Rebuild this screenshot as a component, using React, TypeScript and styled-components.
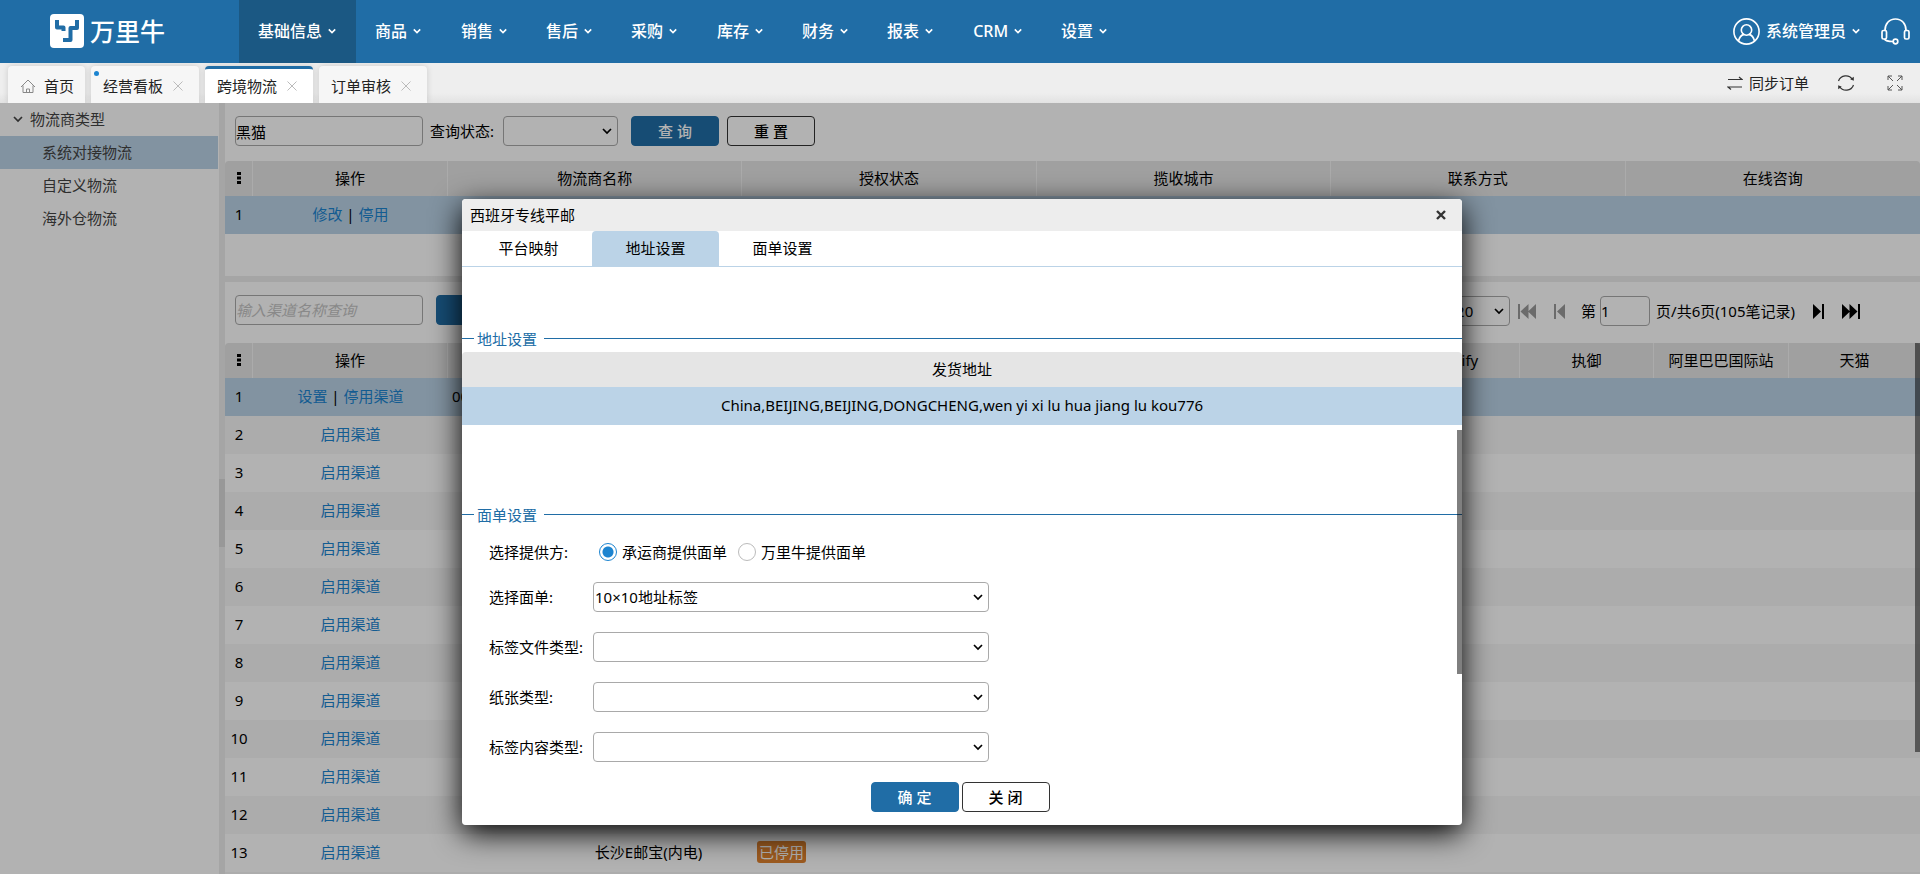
import React, { useState } from "react";
import styled, { createGlobalStyle, css } from "styled-components";

const BLUE = "#206da6";
const SELECTED = "#bbd3e7";
const LINK = "#1c84d0";

const GlobalStyle = createGlobalStyle`
  *, *::before, *::after { box-sizing: border-box; }
  html, body, #root { height: 100%; }
  body {
    margin: 0;
    overflow: hidden;
    color: #000;
    font: 15px/20px "Noto Sans", "Noto Sans CJK SC", sans-serif;
    font-weight: 400;
  }
  button, input, select { font: inherit; color: inherit; margin: 0; }
  button { border: 0; background: none; padding: 0; cursor: pointer; }
  a { color: inherit; text-decoration: none; }
`;

const Page = styled.div`
  display: flex;
  flex-direction: column;
  height: 100%;
`;

/* ---------- top bar ---------- */
const TopBar = styled.header`
  display: flex;
  flex: none;
  height: 63px;
  padding-bottom: 1px;
  background: ${BLUE};
  color: #fff;
  font-size: 16px;
`;
const Brand = styled.a`
  display: flex;
  align-items: center;
  gap: 6px;
  width: 239px;
  padding-left: 50px;
  font-size: 25px;
  line-height: 32px;
  font-weight: 500;
`;
const Menu = styled.nav`
  display: flex;
`;
const MenuItem = styled.a<{ $active?: boolean }>`
  display: flex;
  align-items: center;
  gap: 6px;
  margin-bottom: -1px;
  padding: 0 20px 1px 19px;
  font-weight: 500;
  background: ${(p) => (p.$active ? "#1b5883" : "transparent")};
  &:nth-child(3n) { padding-left: 20px; }
`;
const Account = styled.div`
  display: flex;
  align-items: center;
  margin-left: auto;
  padding-right: 10px;
  gap: 21px;
`;
const UserButton = styled.button`
  display: flex;
  align-items: center;
  gap: 6px;
  font-weight: 500;
`;
const IconButton = styled.button`
  display: flex;
`;

/* ---------- page tabs ---------- */
const TabBar = styled.div`
  display: flex;
  flex: none;
  align-items: flex-end;
  gap: 6px;
  height: 40px;
  padding: 0 17px 0 8px;
  overflow: hidden;
  background: linear-gradient(#eee 75%, #e2e2e2);
`;
const PageTab = styled.div<{ $active?: boolean; $home?: boolean }>`
  position: relative;
  display: flex;
  align-items: center;
  gap: ${(p) => (p.$home ? 8 : 10)}px;
  height: 37px;
  padding: 3px ${(p) => (p.$home ? 11 : 16)}px 0 12px;
  border-radius: 4px 4px 0 0;
  background: ${(p) => (p.$active ? "#fff" : "#f6f6f6")};
  box-shadow: 0 0 6px rgba(0, 0, 0, 0.15);
  color: #222;
  ${(p) => p.$active && css`border-top: 3px solid ${BLUE}; padding-top: 0;`}
`;
const NewDot = styled.i`
  position: absolute;
  top: 5px;
  left: 3px;
  width: 5px;
  height: 5px;
  border-radius: 50%;
  background: ${LINK};
`;
const TabTools = styled.div`
  display: flex;
  align-items: center;
  gap: 32px;
  height: 40px;
  margin-left: auto;
  padding-bottom: 1px;
  color: #222;
`;
const SyncButton = styled.button`
  display: flex;
  align-items: center;
  gap: 6px;
  margin-right: -4px;
`;

/* ---------- workspace ---------- */
const Workspace = styled.div`
  position: relative;
  display: flex;
  flex: 1;
  min-height: 0;
  overflow: hidden;
`;
const Sidebar = styled.aside`
  flex: none;
  width: 219px;
  padding-right: 1px;
  color: #444;
`;
const TreeRow = styled.a<{ $root?: boolean; $selected?: boolean }>`
  display: flex;
  align-items: center;
  gap: 7px;
  height: 33px;
  padding: 0 0 2px ${(p) => (p.$root ? 13 : 42)}px;
  background: ${(p) => (p.$selected ? SELECTED : "transparent")};
`;
const Splitter = styled.div`
  display: flex;
  flex: none;
  align-items: center;
  width: 6px;
  background: #ececec;
`;
const SplitterGrip = styled.div`
  width: 6px;
  height: 68px;
  margin-top: 48px;
  background: #dadada;
`;
const Main = styled.main`
  display: flex;
  flex: 1;
  flex-direction: column;
  min-width: 0;
`;
const CarrierPane = styled.section`
  flex: none;
  height: 179px;
  border-bottom: 6px solid #ececec;
`;
const ChannelPane = styled.section`
  position: relative;
  flex: 1;
  min-height: 0;
  overflow: hidden;
`;
const Toolbar = styled.div<{ $gapBelow: number }>`
  display: flex;
  align-items: center;
  height: 30px;
  margin: 13px 0 ${(p) => p.$gapBelow}px 10px;
`;
const TextInput = styled.input<{ $width: number }>`
  width: ${(p) => p.$width}px;
  height: 30px;
  padding: 0;
  border: 1px solid #a9a9a9;
  border-radius: 4px;
  background: #fff;
  &::placeholder { color: #c4c4c4; font-style: italic; opacity: 1; }
`;
const FieldLabel = styled.label`
  margin: 0 9px 0 7px;
`;
const Button = styled.button<{ $primary?: boolean; $left?: number }>`
  width: 88px;
  height: 30px;
  margin-left: ${(p) => p.$left ?? 0}px;
  padding-bottom: 1px;
  border: 1px solid ${(p) => (p.$primary ? BLUE : "#333")};
  border-radius: 4px;
  background: ${(p) => (p.$primary ? BLUE : "#fff")};
  color: ${(p) => (p.$primary ? "#fff" : "#000")};
  font-weight: 500;
`;

const SelectFrame = styled.div<{ $width: number }>`
  position: relative;
  width: ${(p) => p.$width}px;
  height: 30px;
`;
const NativeSelect = styled.select`
  width: 100%;
  height: 100%;
  padding: 0 24px 0 1px;
  appearance: none;
  border: 1px solid #a9a9a9;
  border-radius: 4px;
  background: #fff;
`;
const SelectArrow = styled.span`
  position: absolute;
  top: 10px;
  right: 6px;
  display: flex;
  pointer-events: none;
`;

/* ---------- grids ---------- */
const Grid = styled.table`
  width: 100%;
  table-layout: fixed;
  border-collapse: separate;
  border-spacing: 0;
  text-align: center;
`;
const HeadCell = styled.th`
  height: 35px;
  padding: 0 0 2px;
  overflow: hidden;
  border-right: 1px solid #f5f5f5;
  background: #e5e5e5;
  font-weight: 400;
  white-space: nowrap;
  &:first-child { border-top-left-radius: 4px; }
  &:last-child { border-right: 0; border-top-right-radius: 4px; }
`;
const BodyRow = styled.tr<{ $selected?: boolean }>`
  background: #fff;
  &:nth-child(even) { background: #f7f7f7; }
  ${(p) => p.$selected && css`&& { background: ${SELECTED}; }`}
`;
const Cell = styled.td<{ $left?: boolean }>`
  height: 38px;
  padding: 0 4px 2px;
  overflow: hidden;
  text-align: ${(p) => (p.$left ? "left" : "center")};
  white-space: nowrap;
`;
const RowNumber = styled(Cell)`
  padding: 0 0 2px;
`;
const Action = styled.a`
  color: ${LINK};
`;
const Disabled = styled.span`
  display: inline-block;
  height: 22px;
  padding: 0 2px;
  border-radius: 3px;
  background: #e1832e;
  color: #fff;
  line-height: 22px;
`;
const GridScrollbar = styled.div`
  position: absolute;
  top: 61px;
  right: 0;
  width: 5px;
  height: 409px;
  background: rgba(0, 0, 0, 0.5);
`;
const Pager = styled.div`
  display: flex;
  align-items: center;
  margin-left: auto;
  padding: 2px 60px 0 0;
`;
const PageText = styled.span`
  margin: 0 18px 0 6px;
`;
const PageLabel = styled.label`
  margin: 0 4px 0 16px;
`;
const PagerButton = styled.button<{ $left: number }>`
  display: flex;
  margin-left: ${(p) => p.$left}px;
  color: #000;
  &:disabled { color: #9a9a9a; }
`;

/* ---------- dialog ---------- */
const Overlay = styled.div`
  position: absolute;
  inset: 0;
  display: flex;
  align-items: flex-start;
  justify-content: center;
  padding: 96px 0 0 4px;
  background: rgba(0, 0, 0, 0.3);
`;
const Dialog = styled.div`
  width: 1000px;
  overflow: hidden;
  border-radius: 4px;
  background: #fff;
`;
const DialogShadow = styled.div`
  border-radius: 4px;
  box-shadow: 0 8px 30px #000;
`;
const DialogTitle = styled.div`
  display: flex;
  align-items: center;
  justify-content: space-between;
  height: 32px;
  padding: 0 16px 0 8px;
  background: #ededed;
`;
const DialogTabs = styled.div`
  display: flex;
  height: 36px;
  padding-left: 3px;
  border-bottom: 1px solid ${SELECTED};
`;
const DialogTab = styled.button<{ $active?: boolean }>`
  width: 127px;
  padding-bottom: 1px;
  border-radius: 4px 4px 0 0;
  background: ${(p) => (p.$active ? SELECTED : "transparent")};
`;
const DialogBody = styled.div`
  position: relative;
  padding-top: 62px;
`;
const Legend = styled.h2`
  display: flex;
  align-items: center;
  height: 20px;
  margin: 0;
  color: ${BLUE};
  font-size: 15px;
  font-weight: 400;
  line-height: 20px;
  &::before, &::after { content: ""; height: 1px; margin-bottom: 2px; background: ${BLUE}; }
  &::before { width: 12px; margin-right: 3px; }
  &::after { flex: 1; margin-left: 7px; }
`;
const AddressGrid = styled(Grid)`
  margin: 3px 0 80px;
`;
const Form = styled.div`
  display: flex;
  flex-direction: column;
  gap: 20px;
  padding: 17px 0 20px 27px;
`;
const FormRow = styled.div<{ $compact?: boolean }>`
  display: flex;
  align-items: center;
  height: ${(p) => (p.$compact ? 20 : 30)}px;
`;
const FormLabel = styled.label`
  width: 104px;
`;
const RadioGroup = styled.div`
  display: flex;
  align-items: center;
  gap: 11px;
  padding-left: 6px;
`;
const RadioLabel = styled.label`
  display: flex;
  align-items: center;
  gap: 5px;
`;
const Radio = styled.input`
  width: 18px;
  height: 18px;
  appearance: none;
  border: 1px solid #bbb;
  border-radius: 50%;
  background: #fff;
  &:checked {
    border-color: ${LINK};
    background: radial-gradient(circle, ${LINK} 5px, #fff 6px);
  }
`;
const DialogFooter = styled.div`
  display: flex;
  justify-content: center;
  gap: 3px;
  padding: 0 4px 13px 0;
`;
const DialogScrollbar = styled.div`
  position: absolute;
  top: 163px;
  right: 0;
  width: 5px;
  height: 244px;
  background: rgba(0, 0, 0, 0.5);
`;

/* ---------- icons ---------- */
const Chevron = ({ size = 8, width = 2 }: { size?: number; width?: number }) => (
  <svg width={size} height={size} viewBox="0 0 10 10" fill="none" stroke="currentColor" strokeWidth={width}>
    <path d="M1 3l4 4 4-4" />
  </svg>
);
const LogoMark = () => (
  <svg width="34" height="34" viewBox="0 0 34 34">
    <rect width="34" height="34" rx="4" fill="#fff" />
    <path d="M7 6v7.500h6.500v3.500M27 6v8h-6.500v12H13" fill="none" stroke={BLUE} strokeWidth="4" strokeLinejoin="round" />
  </svg>
);
const UserIcon = () => (
  <svg width="27" height="27" viewBox="0 0 27 27" fill="none" stroke="#fff" strokeWidth="1.6">
    <circle cx="13.500" cy="13.500" r="12.600" />
    <circle cx="13.500" cy="12" r="5.200" />
    <path d="M5.500 23c1-4 3-6 5.500-6.600M21.500 23c-1-4-3-6-5.500-6.600" />
  </svg>
);
const HeadsetIcon = () => (
  <svg width="29" height="27" viewBox="0 0 29 27" fill="none" stroke="#fff" strokeWidth="1.7">
    <path d="M4 12.500C4 6 8 1 14.500 1S25 6 25 12.500" />
    <rect x="1" y="12.500" width="4.500" height="8.500" rx="1.500" />
    <rect x="23.500" y="12.500" width="4.500" height="8.500" rx="1.500" />
    <path d="M3.500 21c1 2 3 2.500 8.500 2.500" />
    <circle cx="14.500" cy="23.500" r="2.300" />
  </svg>
);
const HomeIcon = () => (
  <svg width="16" height="15" viewBox="0 0 16 15" fill="none" stroke="#888">
    <path d="M1 8l7-7 7 7M3 6.500V13.500H13V6.500M6.500 13.500V10h3v3.500" />
  </svg>
);
const CloseIcon = () => (
  <svg width="10" height="10" viewBox="0 0 10 10" stroke="#bbb">
    <path d="M0.500 0.500l9 9M9.500 0.500l-9 9" />
  </svg>
);
const SwapIcon = () => (
  <svg width="16" height="14" viewBox="0 0 16 14" fill="none" stroke="#333" strokeWidth="1.200">
    <path d="M1 3.500h14l-3-2.500M15 11H1l3 2.500" />
  </svg>
);
const RefreshIcon = () => (
  <svg width="18" height="18" viewBox="0 0 18 18" fill="none" stroke="#333" strokeWidth="1.200">
    <path d="M1.500 7A7.800 7.800 0 0 1 15.500 5.500M16.500 11A7.800 7.800 0 0 1 2.500 12.500" />
    <path d="M16.800 2.800v4l-3.600-1.600zM1.200 15.200v-4l3.600 1.600z" fill="#333" stroke="none" />
  </svg>
);
const FullscreenIcon = () => (
  <svg width="16" height="16" viewBox="0 0 16 16" fill="none" stroke="#555">
    <path d="M1 5V1h4M1 1l5 5M11 1h4v4M15 1l-5 5M1 11v4h4M1 15l5-5M15 11v4h-4M15 15l-5-5" />
  </svg>
);
const DotsIcon = () => (
  <svg width="4" height="12" viewBox="0 0 4 12">
    <path d="M0 0h4v3h-4zM0 4.500h4v3h-4zM0 9h4v3h-4z" />
  </svg>
);
const DialogCloseIcon = () => (
  <svg width="10" height="10" viewBox="0 0 10 10" stroke="#333" strokeWidth="2.400">
    <path d="M1 1l8 8M9 1l-8 8" />
  </svg>
);
const StepIcon = ({ double, back }: { double?: boolean; back?: boolean }) => {
  const w = double ? 18 : 11;
  return (
    <svg width={w} height="15" viewBox={`0 0 ${w} 15`} fill="currentColor">
      <g transform={back ? `matrix(-1 0 0 1 ${w} 0)` : undefined}>
        <path d={double ? "M0 0l8 7.500-8 7.500zM7.500 0l8 7.500-8 7.500zM16 0h2v15h-2z" : "M0 0l8 7.500-8 7.500zM9 0h2v15H9z"} />
      </g>
    </svg>
  );
};

/* ---------- pieces ---------- */
interface SelectProps {
  id: string;
  width: number;
  options: string[];
  label?: string;
}
const Select = ({ id, width, options, label }: SelectProps) => (
  <SelectFrame $width={width}>
    <NativeSelect id={id} aria-label={label} defaultValue={options[0]}>
      {options.map((o) => (
        <option key={o}>{o}</option>
      ))}
    </NativeSelect>
    <SelectArrow>
      <Chevron size={10} width={1.7} />
    </SelectArrow>
  </SelectFrame>
);

const menu = ["基础信息", "商品", "销售", "售后", "采购", "库存", "财务", "报表", "CRM", "设置"];
const pageTabs = [
  { name: "经营看板", dot: true },
  { name: "跨境物流", active: true },
  { name: "订单审核" },
];
const carrierColumns = ["物流商名称", "授权状态", "揽收城市", "联系方式", "在线咨询"];
const channelColumns = [
  { width: 124 },
  { width: 153 },
  { width: 113 },
  { width: 137 },
  { width: 137 },
  { width: 137 },
  { width: 136 },
  { width: 135, name: "Shopify" },
  { width: 134, name: "执御" },
  { width: 135, name: "阿里巴巴国际站" },
  { name: "天猫" },
] as { width?: number; name?: string }[];
const channels = Array.from({ length: 13 }, (_, i) => ({
  id: i + 1,
  code: i === 0 ? "00" : "",
  name: i === 12 ? "长沙E邮宝(内电)" : "",
  disabled: i === 11 || i === 12,
}));
const formSelects = [
  { id: "sheet", label: "选择面单:", options: ["10×10地址标签"] },
  { id: "file-type", label: "标签文件类型:", options: [""] },
  { id: "paper-type", label: "纸张类型:", options: [""] },
  { id: "content-type", label: "标签内容类型:", options: [""] },
];

function AddressDialog() {
  const [provider, setProvider] = useState("承运商提供面单");
  return (
    <Overlay>
      <DialogShadow>
        <Dialog role="dialog" aria-labelledby="dialog-title">
          <DialogTitle>
            <span id="dialog-title">西班牙专线平邮</span>
            <IconButton aria-label="关闭"><DialogCloseIcon /></IconButton>
          </DialogTitle>
          <DialogTabs>
            <DialogTab>平台映射</DialogTab>
            <DialogTab $active>地址设置</DialogTab>
            <DialogTab>面单设置</DialogTab>
          </DialogTabs>
          <DialogBody>
            <Legend>地址设置</Legend>
            <AddressGrid>
              <thead>
                <tr><HeadCell>发货地址</HeadCell></tr>
              </thead>
              <tbody>
                <BodyRow $selected>
                  <Cell>China,BEIJING,BEIJING,DONGCHENG,wen yi xi lu hua jiang lu kou776</Cell>
                </BodyRow>
              </tbody>
            </AddressGrid>
            <Legend>面单设置</Legend>
            <Form>
              <FormRow $compact>
                <FormLabel as="span" id="provider-label">选择提供方:</FormLabel>
                <RadioGroup role="radiogroup" aria-labelledby="provider-label">
                  {["承运商提供面单", "万里牛提供面单"].map((name) => (
                    <RadioLabel key={name}>
                      <Radio
                        type="radio"
                        name="provider"
                        checked={provider === name}
                        onChange={() => setProvider(name)}
                      />
                      {name}
                    </RadioLabel>
                  ))}
                </RadioGroup>
              </FormRow>
              {formSelects.map((f) => (
                <FormRow key={f.id}>
                  <FormLabel htmlFor={f.id}>{f.label}</FormLabel>
                  <Select id={f.id} width={396} options={f.options} />
                </FormRow>
              ))}
            </Form>
            <DialogFooter>
              <Button $primary>确 定</Button>
              <Button>关 闭</Button>
            </DialogFooter>
            <DialogScrollbar />
          </DialogBody>
        </Dialog>
      </DialogShadow>
    </Overlay>
  );
}

export default function App() {
  return (
    <Page>
      <GlobalStyle />
      <TopBar>
        <Brand href="#"><LogoMark />万里牛</Brand>
        <Menu>
          {menu.map((name, i) => (
            <MenuItem key={name} href="#" $active={i === 0}>{name}<Chevron /></MenuItem>
          ))}
        </Menu>
        <Account>
          <UserButton><UserIcon />系统管理员<Chevron /></UserButton>
          <IconButton aria-label="客服"><HeadsetIcon /></IconButton>
        </Account>
      </TopBar>

      <TabBar>
        <PageTab $home><HomeIcon />首页</PageTab>
        {pageTabs.map((t) => (
          <PageTab key={t.name} $active={t.active}>
            {t.dot && <NewDot />}
            {t.name}
            <IconButton aria-label={`关闭${t.name}`}><CloseIcon /></IconButton>
          </PageTab>
        ))}
        <TabTools>
          <SyncButton><SwapIcon />同步订单</SyncButton>
          <IconButton aria-label="刷新"><RefreshIcon /></IconButton>
          <IconButton aria-label="全屏"><FullscreenIcon /></IconButton>
        </TabTools>
      </TabBar>

      <Workspace>
        <Sidebar>
          <TreeRow href="#" $root><Chevron size={10} width={1.7} />物流商类型</TreeRow>
          <TreeRow href="#" $selected>系统对接物流</TreeRow>
          <TreeRow href="#">自定义物流</TreeRow>
          <TreeRow href="#">海外仓物流</TreeRow>
        </Sidebar>
        <Splitter><SplitterGrip /></Splitter>
        <Main>
          <CarrierPane>
            <Toolbar $gapBelow={15}>
              <TextInput $width={188} aria-label="物流商名称" defaultValue="黑猫" />
              <FieldLabel htmlFor="state">查询状态:</FieldLabel>
              <Select id="state" width={115} options={[""]} />
              <Button $primary $left={13}>查 询</Button>
              <Button $left={8}>重 置</Button>
            </Toolbar>
            <Grid>
              <colgroup>
                <col style={{ width: 28 }} />
                <col style={{ width: 195 }} />
              </colgroup>
              <thead>
                <tr>
                  <HeadCell><DotsIcon /></HeadCell>
                  <HeadCell>操作</HeadCell>
                  {carrierColumns.map((c) => <HeadCell key={c}>{c}</HeadCell>)}
                </tr>
              </thead>
              <tbody>
                <BodyRow $selected>
                  <RowNumber>1</RowNumber>
                  <Cell><Action href="#">修改</Action> | <Action href="#">停用</Action></Cell>
                  {carrierColumns.map((c) => <Cell key={c} />)}
                </BodyRow>
              </tbody>
            </Grid>
          </CarrierPane>

          <ChannelPane>
            <Toolbar $gapBelow={18}>
              <TextInput $width={188} aria-label="渠道名称" placeholder="输入渠道名称查询" />
              <Button $primary $left={13} aria-label="查询" />
              <Pager>
                <Select id="page-size" label="每页条数" width={56} options={["20"]} />
                <PagerButton $left={8} disabled aria-label="首页"><StepIcon double back /></PagerButton>
                <PagerButton $left={18} disabled aria-label="上一页"><StepIcon back /></PagerButton>
                <PageLabel htmlFor="page">第</PageLabel>
                <TextInput id="page" $width={50} defaultValue="1" />
                <PageText>页/共6页(105笔记录)</PageText>
                <PagerButton $left={0} aria-label="下一页"><StepIcon /></PagerButton>
                <PagerButton $left={18} aria-label="末页"><StepIcon double /></PagerButton>
              </Pager>
            </Toolbar>
            <Grid>
              <colgroup>
                <col style={{ width: 28 }} />
                <col style={{ width: 195 }} />
                {channelColumns.map((c, i) => <col key={i} style={{ width: c.width }} />)}
              </colgroup>
              <thead>
                <tr>
                  <HeadCell><DotsIcon /></HeadCell>
                  <HeadCell>操作</HeadCell>
                  {channelColumns.map((c, i) => <HeadCell key={i}>{c.name}</HeadCell>)}
                </tr>
              </thead>
              <tbody>
                {channels.map((c) => (
                  <BodyRow key={c.id} $selected={c.id === 1}>
                    <RowNumber>{c.id}</RowNumber>
                    <Cell>
                      {c.id === 1 ? (
                        <><Action href="#">设置</Action> | <Action href="#">停用渠道</Action></>
                      ) : (
                        <Action href="#">启用渠道</Action>
                      )}
                    </Cell>
                    <Cell $left>{c.code}</Cell>
                    <Cell>{c.name}</Cell>
                    <Cell>{c.disabled && <Disabled>已停用</Disabled>}</Cell>
                    {channelColumns.slice(3).map((_, i) => <Cell key={i} />)}
                  </BodyRow>
                ))}
                <BodyRow>
                  <Cell colSpan={channelColumns.length + 2} />
                </BodyRow>
              </tbody>
            </Grid>
            <GridScrollbar />
          </ChannelPane>
        </Main>
        <AddressDialog />
      </Workspace>
    </Page>
  );
}
